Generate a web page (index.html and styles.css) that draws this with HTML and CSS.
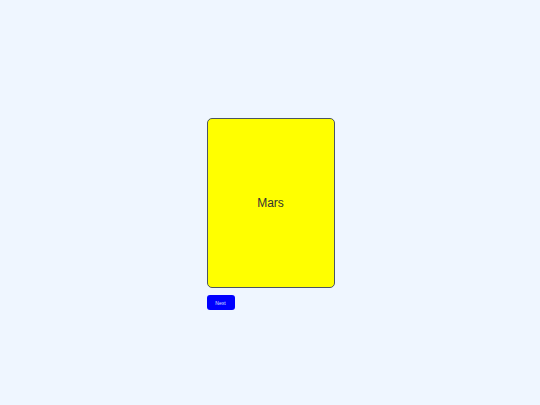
FILE: index.html
```html
<!DOCTYPE html>
<html>
<head>
<meta charset="utf-8">
<link rel="stylesheet" href="styles.css">
</head>
<body>
<div class="page">
  <div class="stack">
    <div class="card"><span class="word">Mars</span></div>
    <button class="next">Next</button>
  </div>
</div>
</body>
</html>
```
FILE: styles.css
```css
html, body { margin: 0; padding: 0; }
body { background: #eff6ff; font-family: "Liberation Sans", Arial, sans-serif; }
.page { width: 540px; height: 405px; display: flex; align-items: center; justify-content: center; }
.stack { display: flex; flex-direction: column; align-items: flex-start; gap: 7px; padding-top: 23px; padding-left: 1px; }
.card { width: 126px; height: 168px; background: #ffff00; border: 1px solid #4b5563; border-radius: 5px; display: flex; align-items: center; justify-content: center; }
.word { font-size: 12px; color: #333; }
.next { width: 28px; height: 15px; background: #0000ff; color: #dbe4ff; border: none; border-radius: 3px; font-family: "Liberation Sans", Arial, sans-serif; font-size: 5px; padding: 0; display: flex; align-items: center; justify-content: center; }
```
